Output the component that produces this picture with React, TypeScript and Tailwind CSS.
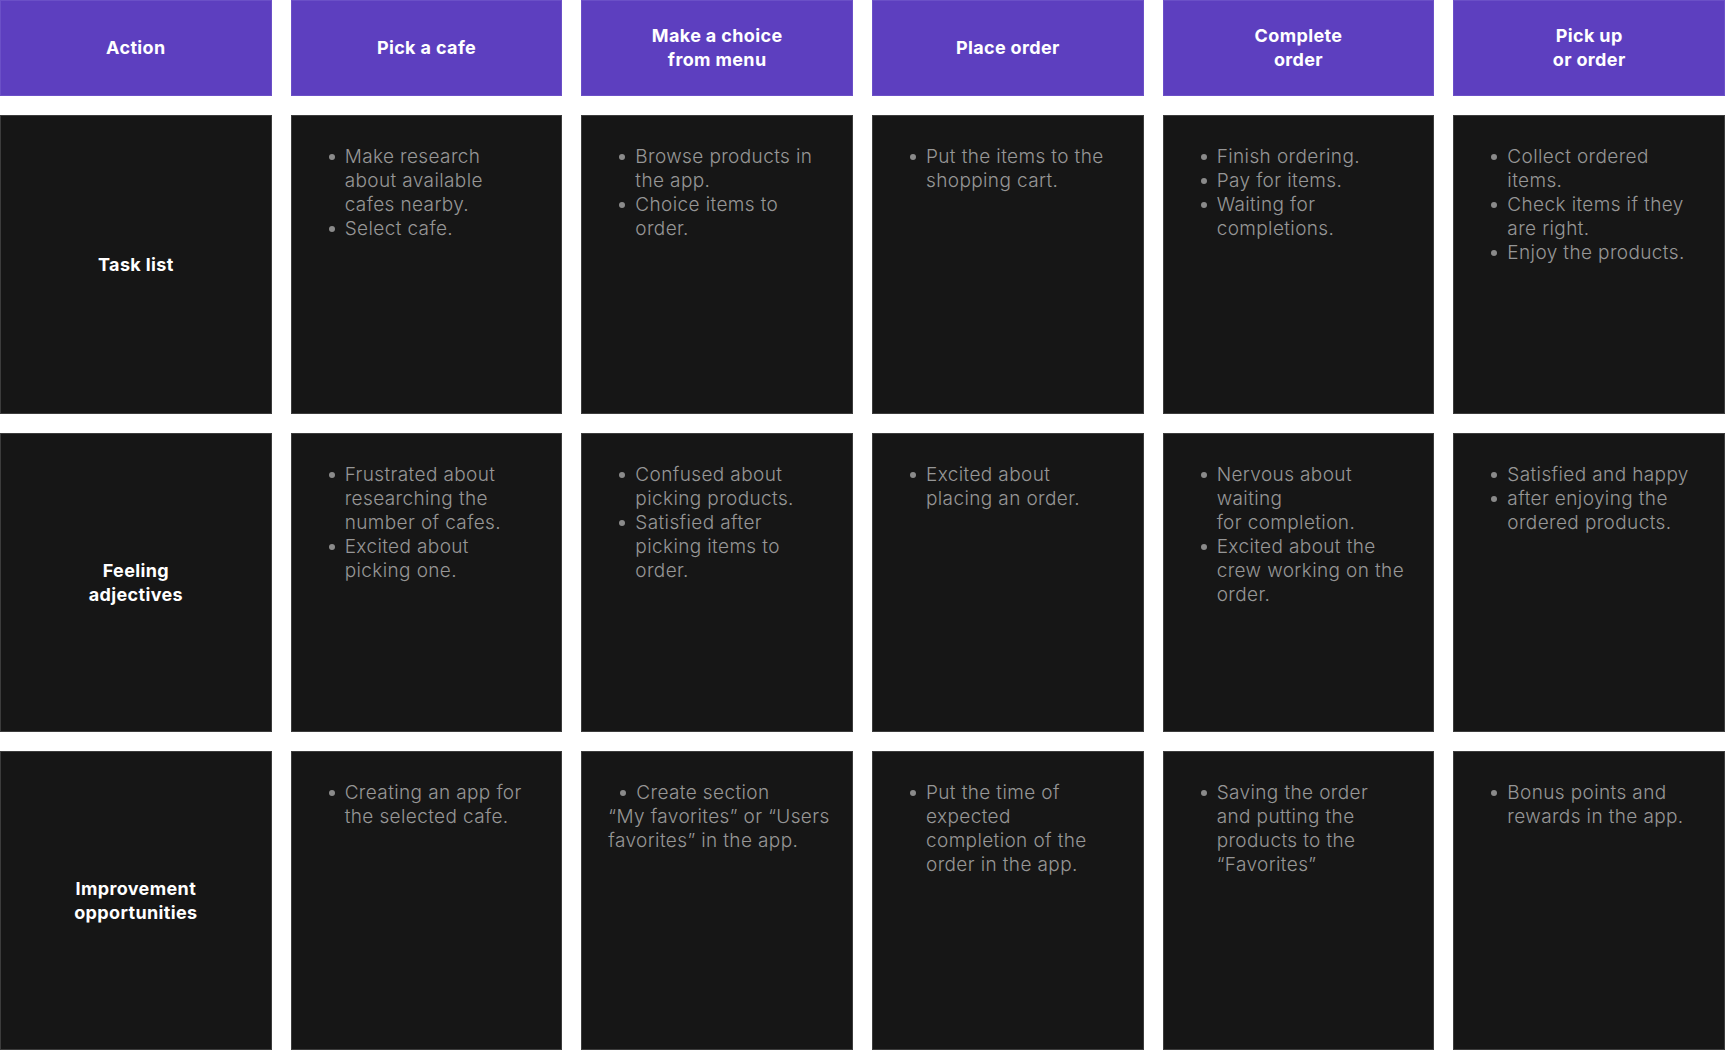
import React from "react";

type Item = string[];

const headers = [
    ["Action"],
    ["Pick a cafe"],
    ["Make a choice", "from menu"],
    ["Place order"],
    ["Complete", "order"],
    ["Pick up", "or order"],
];

const rows: { label: string[]; cells: (Item[] | "favorites")[] }[] = [
    {
        label: ["Task list"],
        cells: [
            [["Make research", "about available", "cafes nearby."], ["Select cafe."]],
            [["Browse products in", "the app."], ["Choice items to", "order."]],
            [["Put the items to the", "shopping cart."]],
            [["Finish ordering."], ["Pay for items."], ["Waiting for", "completions."]],
            [["Collect ordered", "items."], ["Check items if they", "are right."], ["Enjoy the products."]],
        ],
    },
    {
        label: ["Feeling", "adjectives"],
        cells: [
            [["Frustrated about", "researching the", "number of cafes."], ["Excited about", "picking one."]],
            [["Confused about", "picking products."], ["Satisfied after", "picking items to", "order."]],
            [["Excited about", "placing an order."]],
            [["Nervous about", "waiting", "for completion."], ["Excited about the", "crew working on the", "order."]],
            [["Satisfied and happy"], ["after enjoying the", "ordered products."]],
        ],
    },
    {
        label: ["Improvement", "opportunities"],
        cells: [
            [["Creating an app for", "the selected cafe."]],
            "favorites",
            [["Put the time of", "expected", "completion of the", "order in the app."]],
            [["Saving the order", "and putting the", "products to the", "\u201CFavorites\u201D"]],
            [["Bonus points and", "rewards in the app."]],
        ],
    },
];

function Bullet() {
    return (
        <span className="w-[16px] h-[24px] shrink-0 flex items-center">
            <span className="w-[6px] h-[6px] rounded-full bg-[#8a8a8a]" />
        </span>
    );
}

function BulletList({ items }: { items: Item[] }) {
    return (
        <ul className="pl-[37px] pt-[29px]">
            {items.map((lines, i) => (
                <li key={i} className="flex">
                    <Bullet />
                    <div>
                        {lines.map((line, j) => (
                            <div key={j} className="whitespace-nowrap">{line}</div>
                        ))}
                    </div>
                </li>
            ))}
        </ul>
    );
}

function FavoritesNote() {
    // this one is typed oddly in the source: bullet indented, the rest is not
    return (
        <div className="pt-[29px] pl-[26px]">
            <div className="flex pl-[12px]">
                <Bullet />
                <span className="whitespace-nowrap">Create section</span>
            </div>
            <div className="whitespace-nowrap">{"\u201CMy favorites\u201D or \u201CUsers"}</div>
            <div className="whitespace-nowrap">{"favorites\u201D in the app."}</div>
        </div>
    );
}

export default function App() {
    return (
        <div
            className="w-[1725px] bg-white grid grid-cols-6 gap-[19px] grid-rows-[96px_299px_299px_299px]"
            style={{ fontFamily: "Inter, 'Noto Sans', sans-serif" }}
        >
            {headers.map((lines, i) => (
                <div
                    key={i}
                    className="bg-[#5d3fbf] border border-[#6b50c7] flex flex-col items-center justify-center text-white font-bold text-[18px] leading-[24px] tracking-[0.02em]"
                >
                    {lines.map((l) => (
                        <div key={l}>{l}</div>
                    ))}
                </div>
            ))}

            {rows.map((row) => (
                <React.Fragment key={row.label.join(" ")}>
                    <div className="bg-[#161616] border border-[#3c3c3c] flex flex-col items-center justify-center text-white font-bold text-[18px] leading-[24px] tracking-[0.02em]">
                        {row.label.map((l) => (
                            <div key={l}>{l}</div>
                        ))}
                    </div>
                    {row.cells.map((cell, i) => (
                        <div
                            key={i}
                            className="bg-[#161616] border border-[#3c3c3c] text-[#969696] font-light text-[19px] leading-[24px] tracking-[0.02em]"
                        >
                            {cell === "favorites" ? <FavoritesNote /> : <BulletList items={cell} />}
                        </div>
                    ))}
                </React.Fragment>
            ))}
        </div>
    );
}
